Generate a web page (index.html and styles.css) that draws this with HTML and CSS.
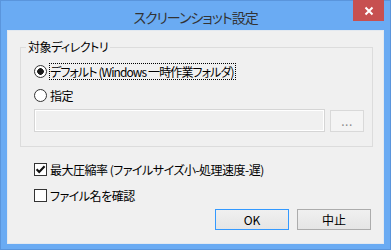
FILE: index.html
```html
<!DOCTYPE html>
<html>
<head>
  <meta charset="utf-8">
  <meta name="viewport" content="width=device-width, initial-scale=1">
  <title>スクリーンショット設定</title>
  <link rel="stylesheet" href="styles.css">
</head>
<body>
  <div class="window">
    <div class="titlebar">
      <span class="title">スクリーンショット設定</span>
      <button class="close" aria-label="閉じる">
        <svg width="10" height="10" viewBox="0 0 10 10"><path d="M1.5 1.5 8.5 8.5 M8.5 1.5 1.5 8.5" stroke="#fff" stroke-width="2"/></svg>
      </button>
    </div>
    <div class="client">
      <div class="group">
        <div class="group-title">対象ディレクトリ</div>
        <label class="option first">
          <span class="radio checked"></span>
          <span class="label focus">デフォルト (Windows 一時作業フォルダ)</span>
        </label>
        <label class="option second">
          <span class="radio"></span>
          <span class="label">指定</span>
        </label>
        <div class="path-row">
          <input class="path" type="text" disabled>
          <button class="browse" disabled>...</button>
        </div>
      </div>
      <label class="check-row first">
        <span class="check">
          <svg width="11" height="11" viewBox="0 0 11 11"><path d="M1.6 5.2 4.2 8 9.6 2.2" fill="none" stroke="#111" stroke-width="2.1"/></svg>
        </span>
        <span>最大圧縮率 (ファイルサイズ小-処理速度-遅)</span>
      </label>
      <label class="check-row second">
        <span class="check"></span>
        <span>ファイル名を確認</span>
      </label>
      <div class="actions">
        <button class="btn default">OK</button>
        <button class="btn">中止</button>
      </div>
    </div>
  </div>
</body>
</html>
```

FILE: styles.css
```css
body {
  margin: 0;
  font-family: "Noto Sans CJK JP", "Noto Sans", sans-serif;
  font-size: 12px;
  font-feature-settings: "palt";
  letter-spacing: -0.5px;
  color: #000;
}
.window {
  width: 391px;
  height: 250px;
  box-sizing: border-box;
  display: flex;
  flex-direction: column;
  padding: 0 6px 5px;
  background: #6aabf3;
  border: 1px solid #5a95dc;
}
.titlebar {
  height: 29px;
  display: grid;
  grid-template-columns: 1fr auto 1fr;
  align-items: center;
}
.title {
  grid-column: 2;
  font-size: 14px;
  letter-spacing: -1px;
  color: #333;
  padding-top: 2px;
}
.close {
  grid-column: 3;
  justify-self: end;
  align-self: start;
  margin-top: -1px;
  width: 31px;
  height: 21px;
  padding: 1px 0 0 1px;
  border: 0;
  background: #c75050;
  display: flex;
  align-items: center;
  justify-content: center;
}
.client {
  flex: 1;
  display: flex;
  flex-direction: column;
  background: #f0f0f0;
  border: 1px solid #e3e9f0;
}
.group {
  margin: 16px 10px 0 12px;
  padding: 0 8px 14px 13px;
  border: 1px solid #dcdcdc;
}
.group-title {
  width: fit-content;
  margin: -9px 0 0 -8px;
  padding: 0 2px;
  line-height: 16px;
  background: #f0f0f0;
}
.option {
  display: flex;
  align-items: center;
  height: 17px;

  &.first {
    margin-top: 8px;
  }

  &.second {
    margin-top: 7px;
  }
}
.radio {
  width: 13px;
  height: 13px;
  box-sizing: border-box;
  margin-right: 2px;
  border: 1px solid #333;
  border-radius: 50%;
  background: #fff;

  &.checked {
    background: radial-gradient(circle, #1a1a1a 0 3px, #fff 3.6px);
  }
}
.label {
  line-height: 15px;
  border: 1px dotted transparent;
  padding: 0 1px 0 0;

  &.focus {
    border-color: #000;
    letter-spacing: -0.9px;
  }
}
.path-row {
  display: flex;
  align-items: flex-end;
  gap: 5px;
  margin-top: 5px;
}
.path {
  flex: 1;
  min-width: 0;
  height: 23px;
  box-sizing: border-box;
  margin: 0;
  border: 1px solid #d5d5d5;
  box-shadow: inset 0 0 0 1px #fff;
  background: #f0f0f0;
}
.browse {
  width: 34px;
  height: 22px;
  padding: 0 0 2px;
  border: 1px solid #d9d9d9;
  background: #f4f4f4;
  font: inherit;
  letter-spacing: 0.5px;
  color: #8c8c8c;
}
.check-row {
  display: flex;
  align-items: center;
  height: 16px;
  padding-left: 26px;

  &.first {
    margin-top: 14px;
  }

  &.second {
    margin-top: 10px;
  }
}
.check {
  width: 13px;
  height: 13px;
  box-sizing: border-box;
  margin-right: 3px;
  border: 1px solid #333;
  background: #fff;
  display: flex;
}
.actions {
  display: flex;
  justify-content: flex-end;
  gap: 8px;
  margin: 6px 12px 0 0;
}
.btn {
  width: 74px;
  height: 21px;
  padding: 0;
  border: 1px solid #acacac;
  background: linear-gradient(#f0f0f0, #e5e5e5);
  font: inherit;
  color: #000;

  &.default {
    border-color: #3399ff;
  }
}
```
